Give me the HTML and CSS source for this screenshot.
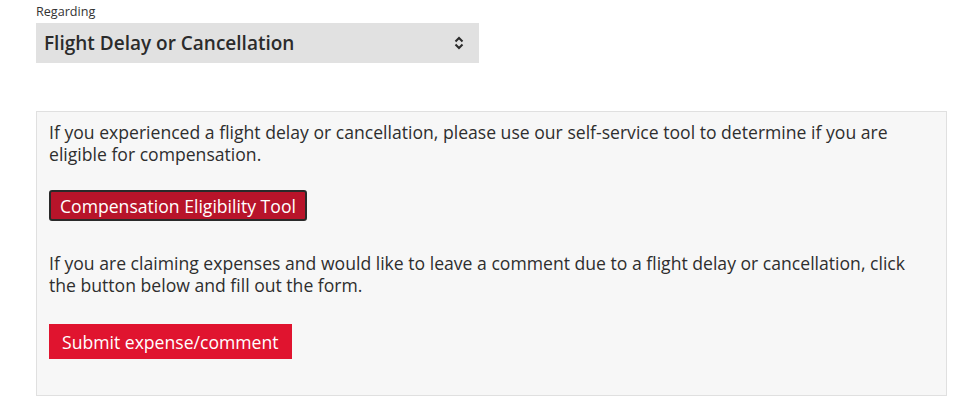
FILE: index.html
```html
<!DOCTYPE html>
<html lang="en">
<head>
<meta charset="utf-8">
<title>Regarding</title>
<link rel="stylesheet" href="styles.css">
</head>
<body>
<div class="page">
  <label class="field-label">Regarding</label>
  <div class="select">
    <span class="select-value">Flight Delay or Cancellation</span>
    <svg class="select-icon" width="10" height="14" viewBox="0 0 10 14" aria-hidden="true">
      <path d="M1.5 5.5 L5 2 L8.5 5.5" fill="none" stroke="#2b2b2b" stroke-width="2"/>
      <path d="M1.5 8.5 L5 12 L8.5 8.5" fill="none" stroke="#2b2b2b" stroke-width="2"/>
    </svg>
  </div>
  <div class="panel">
    <p class="panel-text">If you experienced a flight delay or cancellation, please use our self-service tool to determine if you are eligible for compensation.</p>
    <button class="btn btn-dark" type="button">Compensation Eligibility Tool</button>
    <p class="panel-text second">If you are claiming expenses and would like to leave a comment due to a flight delay or cancellation, click the button below and fill out the form.</p>
    <button class="btn btn-red" type="button">Submit expense/comment</button>
  </div>
</div>
</body>
</html>
```
FILE: styles.css
```css
html, body {
  margin: 0;
  padding: 0;
  background: #ffffff;
}
body {
  font-family: "Open Sans", "Noto Sans", sans-serif;
  color: #333333;
}
.page {
  padding: 3px 16px 0 36px;
  display: flex;
  flex-direction: column;
  align-items: flex-start;
}
.field-label {
  font-size: 12.6px;
  line-height: 17px;
  color: #333333;
  margin-bottom: 3px;
}
.select {
  box-sizing: border-box;
  width: 443px;
  height: 40px;
  background: #e1e1e1;
  display: flex;
  align-items: center;
  justify-content: space-between;
  padding: 0 15px 0 8px;
}
.select-value {
  font-size: 19px;
  font-weight: 600;
  color: #2b2b2b;
}
.select-icon {
  display: block;
}
.panel {
  box-sizing: border-box;
  margin-top: 48px;
  width: 911px;
  height: 285px;
  background: #f7f7f7;
  border: 1px solid #e0e0e0;
  padding: 9px 24px 0 12px;
  display: flex;
  flex-direction: column;
  align-items: flex-start;
}
.panel-text {
  margin: 0;
  font-size: 17.6px;
  line-height: 22px;
  color: #2e2e2e;
}
.panel-text.second {
  margin-top: 31px;
}
.btn {
  font-family: "Open Sans", "Noto Sans", sans-serif;
  font-size: 17.6px;
  color: #ffffff;
  cursor: pointer;
}
.btn-dark {
  margin-top: 25px;
  box-sizing: border-box;
  height: 31px;
  padding: 0 9px;
  background: #b8142a;
  border: 2px solid #2a2a2a;
  border-radius: 3px;
}
.btn-red {
  margin-top: 28px;
  box-sizing: border-box;
  height: 35px;
  padding: 0 13px;
  background: #e0142f;
  border: none;
  border-radius: 0;
}
```
